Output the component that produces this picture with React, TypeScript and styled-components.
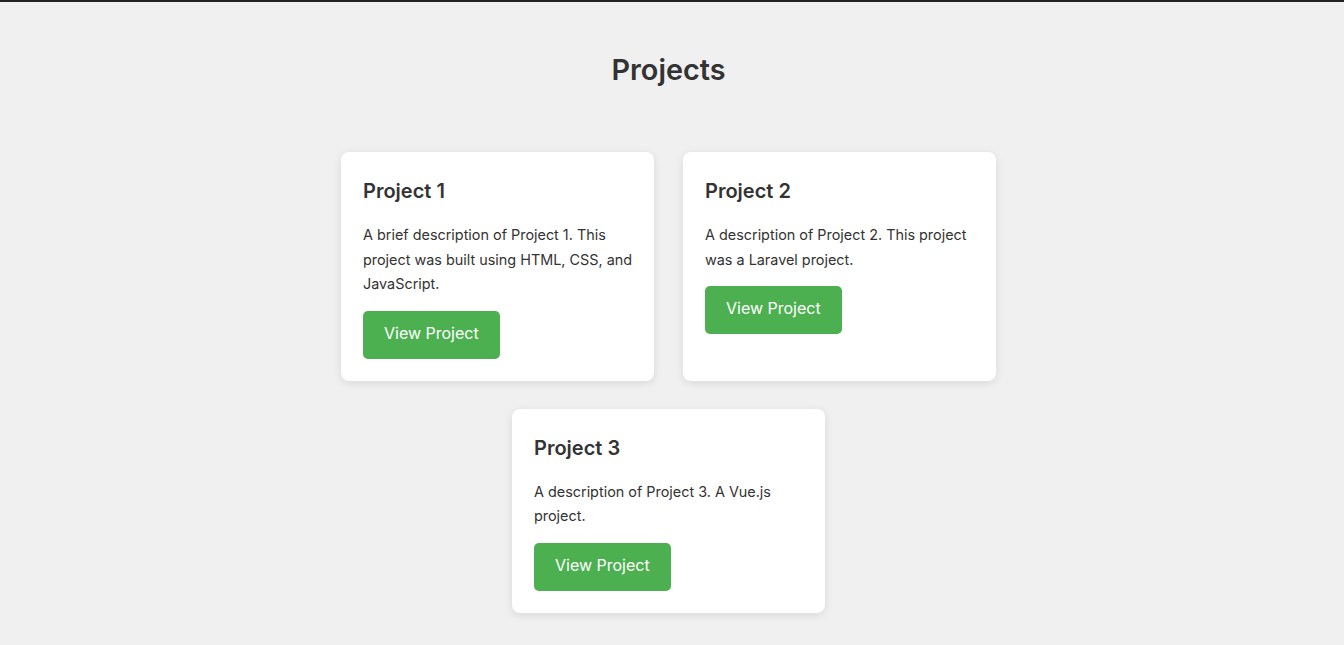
import React from "react";
import styled, { createGlobalStyle } from "styled-components";

const Global = createGlobalStyle`
  html, body { margin: 0; padding: 0; }
  body {
    background: #f0f0f0;
    font-family: Inter, "Noto Sans", sans-serif;
    color: #333;
  }
`;

const TopBar = styled.div`
  height: 2px;
  background: #222;
`;

const Section = styled.section`
  padding: 51px 7px 32px 0;
  text-align: center;
`;

const Title = styled.h2`
  margin: 0 0 65px;
  font-size: 28.8px;
  line-height: 34px;
  font-weight: 600;
  color: #333;
`;

const Grid = styled.div`
  display: flex;
  flex-wrap: wrap;
  justify-content: center;
  column-gap: 29px;
  row-gap: 28px;
  max-width: 655px;
  margin: 0 auto;
`;

const Card = styled.div`
  box-sizing: border-box;
  width: 313px;
  padding: 26px 20px 22px 22px;
  background: #fff;
  border-radius: 8px;
  box-shadow: 0 2px 8px rgba(0, 0, 0, 0.1);
  text-align: left;
`;

const CardTitle = styled.h3`
  margin: 0 0 19px;
  font-size: 20px;
  line-height: 26px;
  font-weight: 600;
  color: #333;
`;

const CardText = styled.p`
  margin: 0 0 14px;
  font-size: 14.4px;
  line-height: 24.5px;
  color: #333;
`;

const Button = styled.a`
  display: inline-block;
  padding: 10px 21px 14px;
  background: #4caf50;
  color: #fff;
  font-size: 16px;
  line-height: 24px;
  border-radius: 5px;
  text-decoration: none;
`;

const projects = [
  { title: "Project 1", text: "A brief description of Project 1. This project was built using HTML, CSS, and JavaScript." },
  { title: "Project 2", text: "A description of Project 2. This project was a Laravel project." },
  { title: "Project 3", text: "A description of Project 3. A Vue.js project." },
];

export default function App() {
  return (
    <>
      <Global />
      <TopBar />
      <Section>
        <Title>Projects</Title>
        <Grid>
          {projects.map((p) => (
            <Card key={p.title}>
              <CardTitle>{p.title}</CardTitle>
              <CardText>{p.text}</CardText>
              <Button href="#">View Project</Button>
            </Card>
          ))}
        </Grid>
      </Section>
    </>
  );
}
